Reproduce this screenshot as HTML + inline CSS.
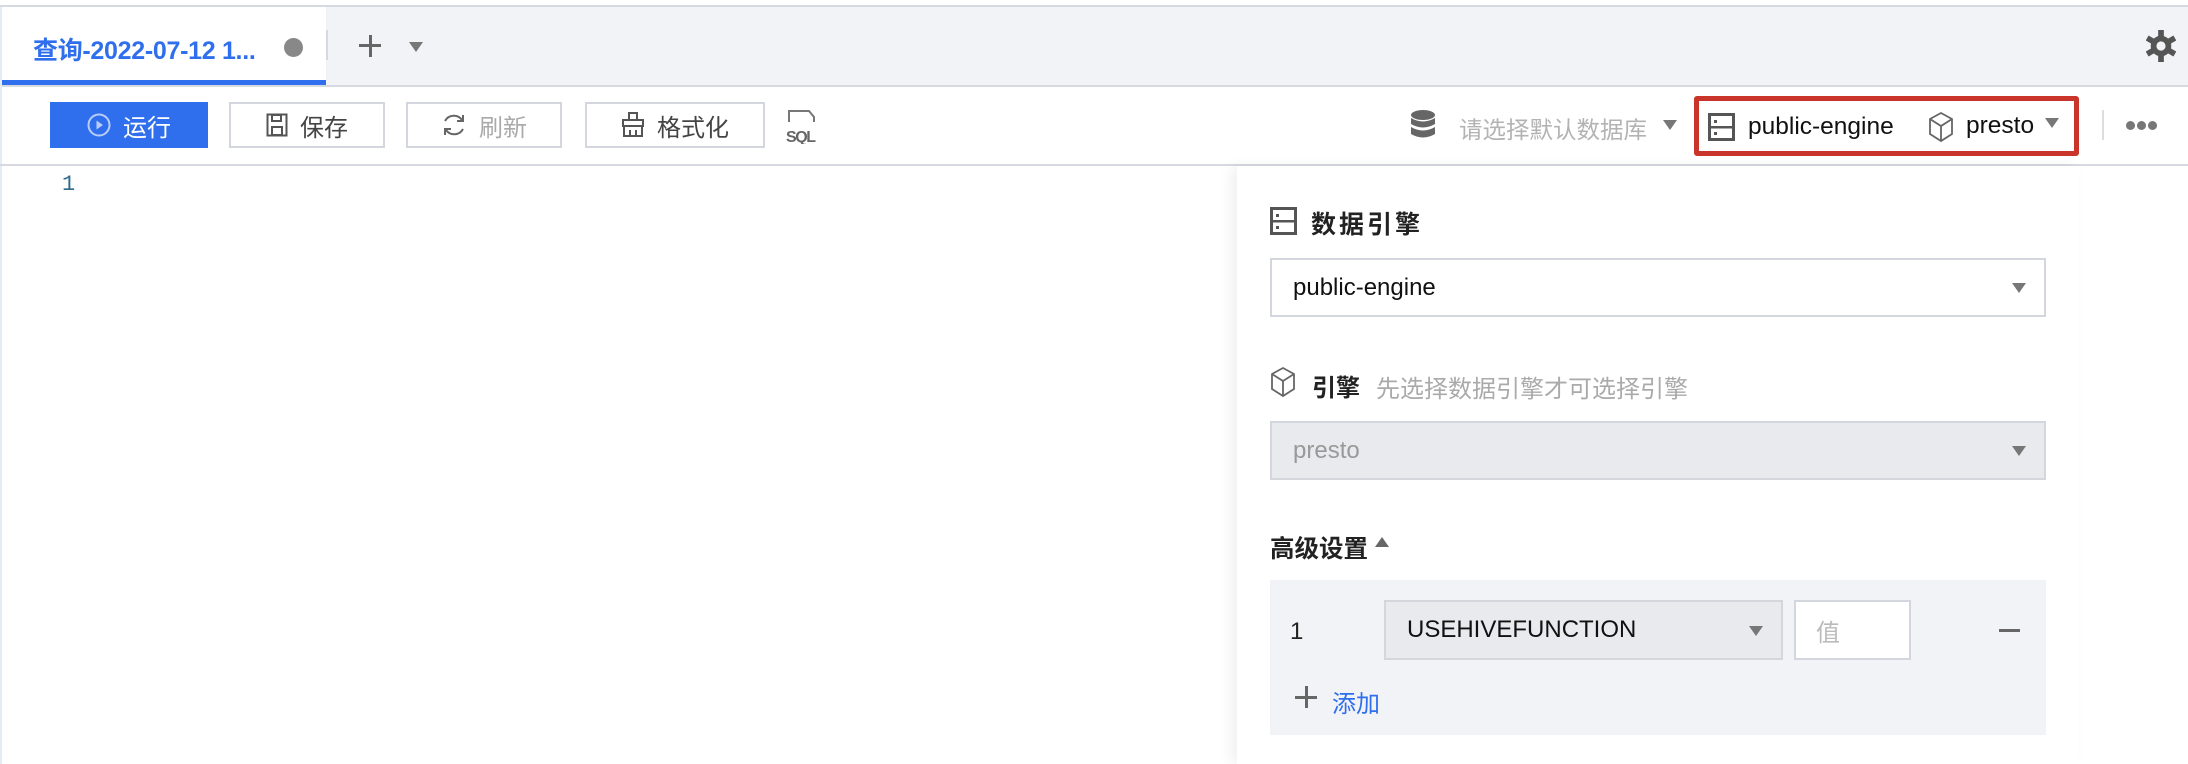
<!DOCTYPE html>
<html><head><meta charset="utf-8"><style>
*{margin:0;padding:0;box-sizing:border-box}
body{width:2188px;height:764px;overflow:hidden;background:#fff;font-family:"Liberation Sans","Noto Sans CJK SC",sans-serif;position:relative;color:#222}
.a{position:absolute}
.btn{position:absolute;top:102px;height:46px;border:2px solid #d3d6dd;background:#fff;display:flex;align-items:center;justify-content:center;font-size:24px;color:#444;gap:12px}
.tri{width:0;height:0;border-left:7px solid transparent;border-right:7px solid transparent;border-top:10px solid #777;position:absolute}
.sel{position:absolute;border:2px solid #d3d6dd;font-size:24px;display:flex;align-items:center}
</style></head><body>
<div class="a" style="left:0;top:5px;width:2188px;height:2px;background:#d6d9e0"></div>
<div class="a" style="left:0;top:7px;width:2188px;height:78px;background:#f2f3f7"></div>
<div class="a" style="left:0;top:7px;width:326px;height:78px;background:#fff"></div>
<div class="a" style="left:0;top:80px;width:326px;height:5px;background:#2f6fed"></div>
<div class="a" style="left:0;top:85px;width:2188px;height:2px;background:#d6d9e0"></div>
<div class="a" style="left:0;top:7px;width:2px;height:757px;background:#e3ebf7"></div>
<div class="a" style="left:33px;top:31px;font-size:25px;font-weight:bold;color:#2f6fed;letter-spacing:-0.3px">查询-2022-07-12 1...</div>
<div class="a" style="left:284px;top:38px;width:19px;height:19px;border-radius:50%;background:#888"></div>
<div class="a" style="left:326px;top:30px;width:2px;height:30px;background:#d6d9e0"></div>
<div class="a" style="left:359px;top:44px;width:22px;height:3px;background:#666"></div>
<div class="a" style="left:368.5px;top:34.5px;width:3px;height:22px;background:#666"></div>
<div class="tri" style="left:409px;top:42px"></div>
<svg class="a" style="left:2146px;top:30px" width="30" height="32" viewBox="0 0 26 28"><g fill="#555"><rect x="10.5" y="0" width="5" height="28"/><rect x="10.5" y="0" width="5" height="28" transform="rotate(60 13 14)"/><rect x="10.5" y="0" width="5" height="28" transform="rotate(-60 13 14)"/><circle cx="13" cy="14" r="9"/></g><circle cx="13" cy="14" r="4" fill="#f2f3f7"/></svg>
<div class="btn" style="left:50px;width:158px;background:#2f6fed;border-color:#2f6fed;color:#fff"><svg width="24" height="24"><circle cx="12" cy="12" r="10.5" fill="none" stroke="#b8cdf8" stroke-width="2"/><path d="M9.5 7.5 L16 12 L9.5 16.5Z" fill="#b8cdf8"/></svg>运行</div>
<div class="btn" style="left:229px;width:156px"><svg width="22" height="24"><rect x="1.5" y="1.5" width="19" height="21" fill="none" stroke="#555" stroke-width="2"/><rect x="6" y="2" width="9" height="6" fill="none" stroke="#555" stroke-width="2"/><rect x="6" y="14" width="10" height="8" fill="none" stroke="#555" stroke-width="2"/></svg>保存</div>
<div class="btn" style="left:406px;width:156px;color:#aaa"><svg width="26" height="26"><path d="M21 8 A10 10 0 0 0 4 9 M5 18 A10 10 0 0 0 22 17" fill="none" stroke="#666" stroke-width="2"/><path d="M22 3 L22 9 L16 9" fill="none" stroke="#666" stroke-width="2"/><path d="M4 23 L4 17 L10 17" fill="none" stroke="#666" stroke-width="2"/></svg>刷新</div>
<div class="btn" style="left:585px;width:180px"><svg width="24" height="26"><rect x="8" y="1" width="8" height="7" fill="none" stroke="#555" stroke-width="2"/><rect x="2" y="8" width="20" height="6" fill="none" stroke="#555" stroke-width="2"/><path d="M3 14 V24 H21 V14 M9 18 V24 M15 18 V24" fill="none" stroke="#555" stroke-width="2"/></svg>格式化</div>
<svg class="a" style="left:786px;top:108px" width="32" height="36"><path d="M3 14 V3 H23 L28 9 V14" fill="none" stroke="#777" stroke-width="2"/><text x="0" y="34" font-family="Liberation Sans" font-weight="bold" font-size="16" fill="#666" textLength="30">SQL</text></svg>
<svg class="a" style="left:1410px;top:110px" width="26" height="30"><g fill="#666"><ellipse cx="13" cy="5" rx="12" ry="5"/><path d="M1 8 Q13 15 25 8 V14 Q13 21 1 14Z"/><path d="M1 17 Q13 24 25 17 V24 Q13 31 1 24Z"/></g></svg>
<div class="a" style="left:1459px;top:111px;font-size:23.5px;color:#b3b3b3">请选择默认数据库</div>
<div class="tri" style="left:1663px;top:120px"></div>
<div class="a" style="left:1694px;top:96px;width:385px;height:60px;border:5px solid #c9352a;border-radius:3px;background:#fff"></div>
<svg class="a" style="left:1708px;top:113px" width="27" height="28"><rect x="1.5" y="1.5" width="24" height="25" fill="none" stroke="#555" stroke-width="3"/><rect x="1.5" y="13" width="24" height="2.5" fill="#555"/><rect x="6" y="7" width="3" height="3" fill="#555"/><rect x="6" y="19" width="3" height="3" fill="#555"/></svg>
<div class="a" style="left:1748px;top:113px;font-size:24.5px;color:#111">public-engine</div>
<svg class="a" style="left:1928px;top:111px" width="26" height="32"><path d="M13 2 L24 8 V23 L13 30 L2 23 V8Z M2 8 L13 15 L24 8 M13 15 V30" fill="none" stroke="#666" stroke-width="1.8"/></svg>
<div class="a" style="left:1966px;top:112px;font-size:24.5px;color:#111">presto</div>
<div class="tri" style="left:2045px;top:118px"></div>
<div class="a" style="left:2102px;top:110px;width:2px;height:30px;background:#ddd"></div>
<div class="a" style="left:2126px;top:121px;width:9px;height:9px;border-radius:50%;background:#777"></div>
<div class="a" style="left:2137px;top:121px;width:9px;height:9px;border-radius:50%;background:#777"></div>
<div class="a" style="left:2148px;top:121px;width:9px;height:9px;border-radius:50%;background:#777"></div>
<div class="a" style="left:0;top:164px;width:2188px;height:2px;background:#d6d9e0"></div>
<div class="a" style="left:62px;top:172px;font-size:22px;color:#2e6a8c;font-family:'Liberation Mono',monospace">1</div>
<div class="a" style="left:1237px;top:166px;width:842px;height:598px;background:#fff;box-shadow:-6px 0 12px rgba(0,0,0,0.06)"></div>
<svg class="a" style="left:1270px;top:207px" width="27" height="28"><rect x="1.5" y="1.5" width="24" height="25" fill="none" stroke="#555" stroke-width="3"/><rect x="1.5" y="13" width="24" height="2.5" fill="#555"/><rect x="6" y="7" width="3" height="3" fill="#555"/><rect x="6" y="19" width="3" height="3" fill="#555"/></svg>
<div class="a" style="left:1311px;top:205px;font-size:25px;font-weight:bold;color:#222;letter-spacing:3px">数据引擎</div>
<div class="sel" style="left:1270px;top:258px;width:776px;height:59px;padding-left:21px;color:#111">public-engine</div>
<div class="tri" style="left:2012px;top:283px"></div>
<svg class="a" style="left:1270px;top:366px" width="26" height="32"><path d="M13 2 L24 8 V23 L13 30 L2 23 V8Z M2 8 L13 15 L24 8 M13 15 V30" fill="none" stroke="#666" stroke-width="1.8"/></svg>
<div class="a" style="left:1312px;top:368px;font-size:24px;font-weight:bold;color:#222">引擎</div>
<div class="a" style="left:1376px;top:369px;font-size:24px;color:#aaa">先选择数据引擎才可选择引擎</div>
<div class="sel" style="left:1270px;top:421px;width:776px;height:59px;padding-left:21px;background:#e9eaee;color:#999">presto</div>
<div class="tri" style="left:2012px;top:446px"></div>
<div class="a" style="left:1270px;top:530px;font-size:24.5px;font-weight:bold;color:#222">高级设置</div>
<div class="a" style="left:1375px;top:537px;width:0;height:0;border-left:7px solid transparent;border-right:7px solid transparent;border-bottom:10px solid #666"></div>
<div class="a" style="left:1270px;top:580px;width:776px;height:155px;background:#f2f3f7"></div>
<div class="a" style="left:1290px;top:618px;font-size:24px;color:#222">1</div>
<div class="sel" style="left:1384px;top:600px;width:399px;height:60px;padding-left:21px;background:#e9eaee;color:#111">USEHIVEFUNCTION</div>
<div class="tri" style="left:1749px;top:626px"></div>
<div class="sel" style="left:1794px;top:600px;width:117px;height:60px;padding-left:20px;background:#fff;color:#bbb">值</div>
<div class="a" style="left:1999px;top:629px;width:21px;height:3px;background:#666"></div>
<div class="a" style="left:1295px;top:696px;width:22px;height:3px;background:#666"></div>
<div class="a" style="left:1304.5px;top:686px;width:3px;height:22px;background:#666"></div>
<div class="a" style="left:1332px;top:684px;font-size:24px;color:#2f6fed">添加</div>
</body></html>
